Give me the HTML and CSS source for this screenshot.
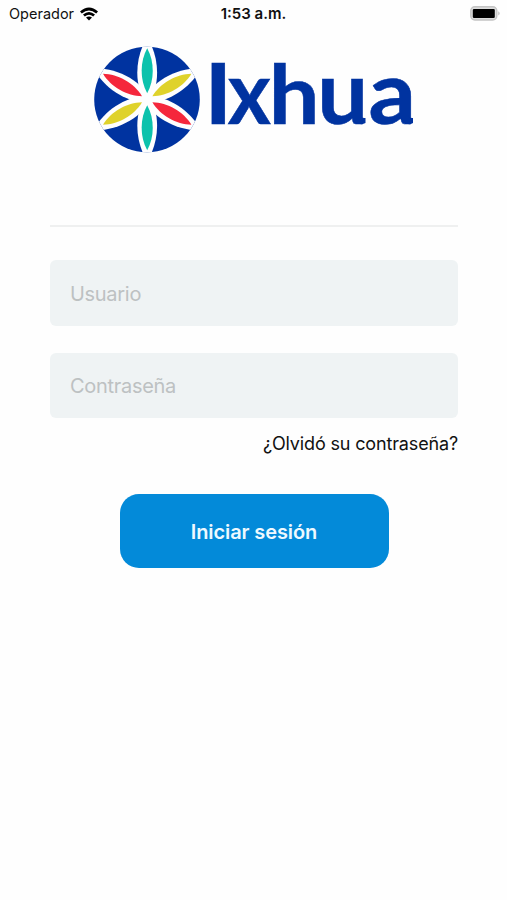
FILE: index.html
```
<!DOCTYPE html>
<html lang="es">

<head>
    <meta charset="UTF-8">
    <meta name="viewport" content="width=device-width, initial-scale=1.0">
    <title>Ixhua</title>
    <link rel="stylesheet" href="styles.css">
</head>

<body>
    <header class="status-bar">
        <div class="carrier">
            <span class="carrier-name">Operador</span>
            <svg class="wifi" viewBox="0 0 18 14" width="18" height="14">
                <path d="M0 4.5 Q9 -3.5 18 4.5 L16.2 6.4 Q9 0.6 1.8 6.4Z"/>
                <path d="M3 7.6 Q9 2.4 15 7.6 L13.2 9.5 Q9 6 4.8 9.5Z"/>
                <path d="M6 10.6 Q9 8.2 12 10.6 L9 13.6Z"/>
            </svg>
        </div>
        <span class="clock">1:53 a.m.</span>
        <svg class="battery" viewBox="0 0 31 15" width="31" height="15">
            <rect x="0.8" y="0.8" width="26" height="13.2" rx="4" fill="#ddd" stroke="#c4c4c4" stroke-width="1.4"/>
            <rect x="2.8" y="2.9" width="22" height="9" rx="1.2" fill="#000"/>
            <path d="M28.3 5.2 Q31 7.4 28.3 9.6Z" fill="#b9b9b9"/>
        </svg>
    </header>

    <main class="login">
        <svg class="logo" viewBox="0 0 330 108" width="330" height="108">
            <defs>
                <clipPath id="disc"><circle cx="53" cy="53.5" r="52.8"/></clipPath>
                <path id="gap" d="M0 -62 C12.8 -42 13.6 -11 0 4 C-13.6 -11 -12.8 -42 0 -62Z"/>
                <path id="petal" d="M0 -51 C7.4 -38 7.4 -19 0 -6 C-7.4 -19 -7.4 -38 0 -51Z"/>
            </defs>
            <g clip-path="url(#disc)">
                <rect class="disc" width="106" height="107"/>
                <g class="gaps" transform="translate(53.2 53.3)">
                    <use href="#gap"/>
                    <use href="#gap" transform="rotate(60)"/>
                    <use href="#gap" transform="rotate(120)"/>
                    <use href="#gap" transform="rotate(180)"/>
                    <use href="#gap" transform="rotate(240)"/>
                    <use href="#gap" transform="rotate(300)"/>
                </g>
                <g transform="translate(53.2 53.3)">
                    <use href="#petal" class="teal"/>
                    <use href="#petal" class="yellow" transform="rotate(60)"/>
                    <use href="#petal" class="red" transform="rotate(120)"/>
                    <use href="#petal" class="teal" transform="rotate(180)"/>
                    <use href="#petal" class="yellow" transform="rotate(240)"/>
                    <use href="#petal" class="red" transform="rotate(300)"/>
                </g>
            </g>
            <g class="wordmark">
                <text transform="translate(110.2 78) scale(1.12 1)">I</text>
                <text transform="translate(133.8 78) scale(0.97 1.04)">x</text>
                <text transform="translate(174.8 78) scale(1.06 0.97)">h</text>
                <text transform="translate(223.3 78) scale(1.06 1.04)">u</text>
                <text transform="translate(274.5 78) scale(1.1 1.04)">a</text>
            </g>
            <!-- feet of the u and the a -->
            <path class="disc" d="M266 69 Q267 72.5 271.5 72 V77 Q269 78.6 266 78Z M314 69 Q315 72.5 319 72 V77 Q317 78.6 314 78Z"/>
        </svg>

        <form class="form">
            <input class="field" type="text" placeholder="Usuario" aria-label="Usuario">
            <input class="field" type="password" placeholder="Contraseña" aria-label="Contraseña">
            <a class="forgot" href="#">¿Olvidó su contraseña?</a>
            <button class="submit" type="button">Iniciar sesión</button>
        </form>
    </main>
</body>

</html>
```
FILE: styles.css
```
* {
    box-sizing: border-box;
}

body {
    margin: 0;
    min-height: 100vh;
    background-color: #fefefe;
    font-family: Inter, "Liberation Sans", sans-serif;
    color: #111;
}

/* Status bar */
.status-bar {
    display: grid;
    grid-template-columns: 1fr auto 1fr;
    align-items: center;
    height: 27px;
    padding: 0 6px 0 9px;
}

.carrier {
    display: flex;
    align-items: center;
    gap: 6px;
    font-size: 14.5px;
}

.wifi {
    fill: #000;
}

.clock {
    margin-right: 3px;
    font-size: 15px;
    font-weight: 600;
}

.battery {
    justify-self: end;
}

/* Login */
.login {
    padding: 0 49px 0 50px;
}

.logo {
    display: block;
    margin: 19px 0 0 44px;
    overflow: visible;
}

.disc {
    fill: #0033a0;
}

.gaps {
    fill: #fefefe;
}

.teal {
    fill: #0cc2ac;
}

.yellow {
    fill: #dfd22b;
}

.red {
    fill: #f5273c;
}

.wordmark {
    font-family: Lato, sans-serif;
    font-size: 85px;
    font-weight: 700;
    fill: #0033a0;
    stroke: #0033a0;
    stroke-width: 0.5px;
}

.form {
    display: flex;
    flex-direction: column;
    margin-top: 71px;
    padding-top: 33px;
    border-top: 2px solid #eff0f0;
}

.field {
    height: 66px;
    margin: 0 0 27px;
    padding: 1px 20px 0;
    border: none;
    border-radius: 6px;
    background-color: #eff3f4;
    font-family: inherit;
    font-size: 20px;
    letter-spacing: -0.3px;
    color: #111;
}

.field + .field {
    height: 65px;
    margin-bottom: 14px;
}

.field::placeholder {
    color: #bdc1c2;
    opacity: 1;
}

.forgot {
    align-self: flex-end;
    font-size: 18px;
    line-height: 24px;
    letter-spacing: -0.15px;
    color: #111;
    text-decoration: none;
}

.submit {
    align-self: center;
    width: 269px;
    height: 74px;
    margin-top: 38px;
    padding-top: 2px;
    border: none;
    border-radius: 19px;
    background-color: #038ad9;
    font-family: inherit;
    font-size: 20px;
    font-weight: 600;
    letter-spacing: -0.1px;
    color: #eef9ff;
}
```
